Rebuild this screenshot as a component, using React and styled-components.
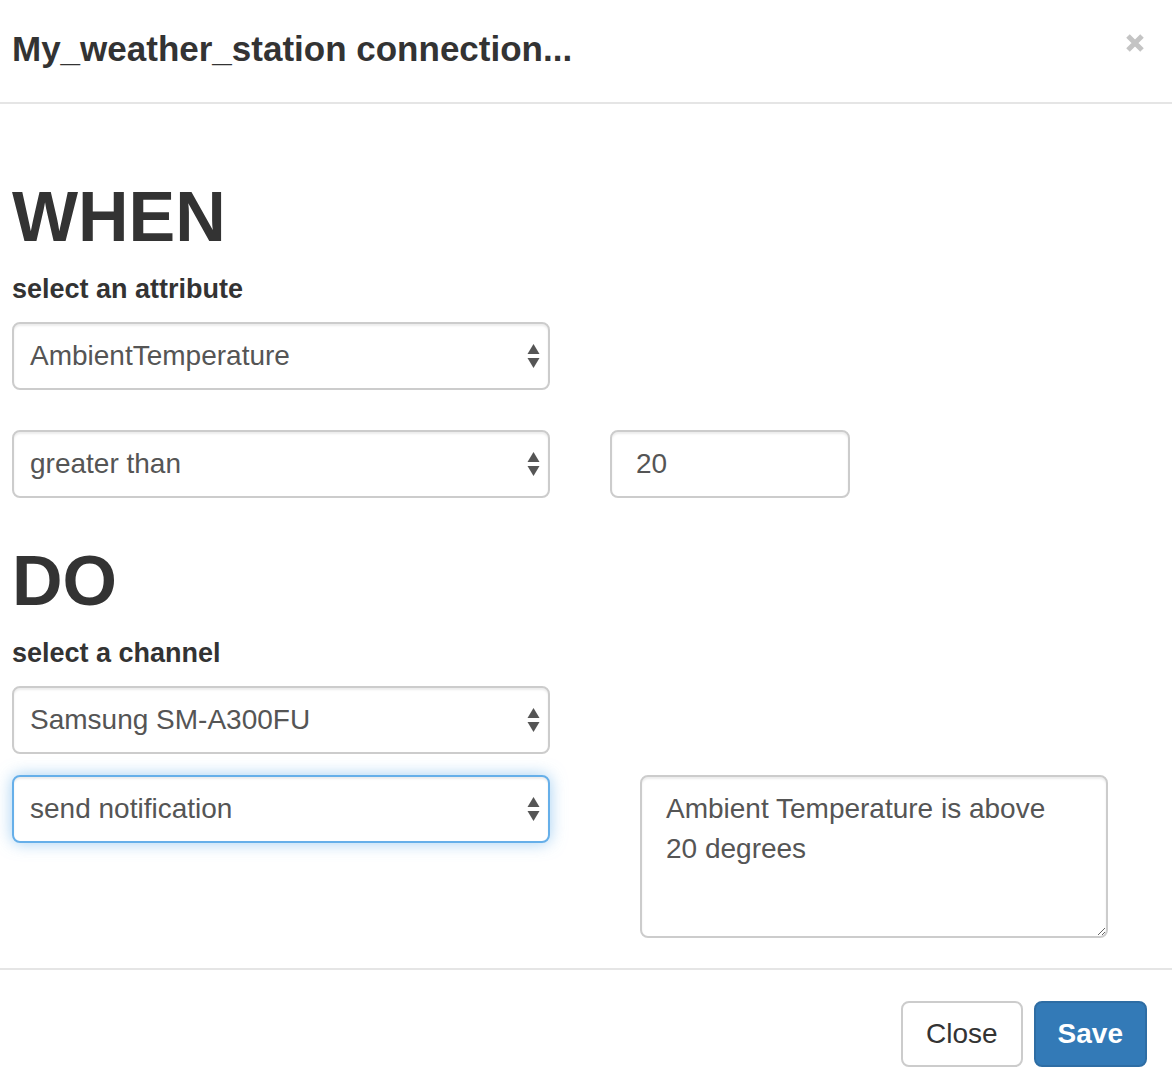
import React from "react";
import styled, { createGlobalStyle } from "styled-components";

const GlobalStyle = createGlobalStyle`
  html, body {
    margin: 0;
    padding: 0;
    background: #fff;
  }
  body {
    font-family: "Liberation Sans", Arial, sans-serif;
    color: #333;
  }
`;

const Modal = styled.div`
  width: 1172px;
  background: #fff;
`;

const Header = styled.div`
  display: flex;
  justify-content: space-between;
  align-items: flex-start;
  padding: 23px 27px 27px 12px;
  border-bottom: 2px solid #e5e5e5;
`;

const Title = styled.h4`
  margin: 0;
  font-size: 35px;
  line-height: 52px;
  font-weight: 700;
  color: #333;
`;

const CloseX = styled.button`
  border: none;
  background: none;
  padding: 0;
  margin-top: 10px;
  cursor: pointer;
  display: flex;
`;

const Body = styled.div`
  padding: 73px 12px 30px 12px;
`;

const Heading = styled.h1`
  margin: ${(p) => p.$top || 0}px 0 12px 0;
  font-size: 70px;
  line-height: 80px;
  font-weight: 700;
  color: #333;
`;

const Label = styled.label`
  display: block;
  font-size: 27px;
  line-height: 40px;
  font-weight: 700;
  color: #333;
  margin-bottom: 13px;
`;

const Row = styled.div`
  display: flex;
  align-items: flex-start;
  gap: ${(p) => p.$gap || 0}px;
  margin-bottom: ${(p) => p.$mb || 0}px;
`;

const SelectBox = styled.div`
  box-sizing: border-box;
  width: 538px;
  height: 68px;
  display: flex;
  align-items: center;
  justify-content: space-between;
  padding: 0 8px 0 16px;
  border: 2px solid ${(p) => (p.$focus ? "#66afe9" : "#ccc")};
  border-radius: 8px;
  background: #fff;
  font-size: 28px;
  color: #555;
  box-shadow: ${(p) =>
    p.$focus
      ? "inset 0 2px 2px rgba(0,0,0,.075), 0 0 16px rgba(102,175,233,.6)"
      : "inset 0 2px 2px rgba(0,0,0,.075)"};
`;

const TextInput = styled.div`
  box-sizing: border-box;
  width: 240px;
  height: 68px;
  display: flex;
  align-items: center;
  padding: 0 24px;
  border: 2px solid #ccc;
  border-radius: 8px;
  font-size: 28px;
  color: #555;
  box-shadow: inset 0 2px 2px rgba(0,0,0,.075);
`;

const TextArea = styled.textarea`
  box-sizing: border-box;
  width: 468px;
  height: 163px;
  padding: 12px 24px;
  border: 2px solid #ccc;
  border-radius: 8px;
  font-family: "Liberation Sans", Arial, sans-serif;
  font-size: 28px;
  line-height: 40px;
  color: #555;
  outline: none;
  box-shadow: inset 0 2px 2px rgba(0,0,0,.075);
`;

const Footer = styled.div`
  display: flex;
  justify-content: flex-end;
  gap: 11px;
  padding: 31px 25px 11px 0;
  border-top: 2px solid #e5e5e5;
`;

const Button = styled.button`
  box-sizing: border-box;
  height: 66px;
  padding: 0 ${(p) => (p.$primary ? 22 : 23)}px;
  border-radius: 8px;
  font-family: "Liberation Sans", Arial, sans-serif;
  font-size: 28px;
  font-weight: ${(p) => (p.$primary ? 700 : 400)};
  border: 2px solid ${(p) => (p.$primary ? "#2e6da4" : "#ccc")};
  background: ${(p) => (p.$primary ? "#337ab7" : "#fff")};
  color: ${(p) => (p.$primary ? "#fff" : "#333")};
  cursor: pointer;
`;

function Arrows() {
  return (
    <svg width="13" height="26" viewBox="0 0 13 26">
      <polygon points="6.5,1 12.5,11 0.5,11" fill="#555" />
      <polygon points="0.5,15 12.5,15 6.5,25" fill="#555" />
    </svg>
  );
}

function Select({ value, focus }) {
  return (
    <SelectBox $focus={focus}>
      <span>{value}</span>
      <Arrows />
    </SelectBox>
  );
}

export default function App() {
  return (
    <Modal>
      <GlobalStyle />
      <Header>
        <Title>My_weather_station connection...</Title>
        <CloseX aria-label="close">
          <svg width="20" height="20" viewBox="0 0 20 20">
            <path d="M3 3 L17 17 M17 3 L3 17" stroke="#c4c4c4" strokeWidth="5" strokeLinecap="butt" />
          </svg>
        </CloseX>
      </Header>
      <Body>
        <Heading>WHEN</Heading>
        <Label>select an attribute</Label>
        <Row $mb={40}>
          <Select value="AmbientTemperature" />
        </Row>
        <Row $gap={60}>
          <Select value="greater than" />
          <TextInput>20</TextInput>
        </Row>
        <Heading $top={43}>DO</Heading>
        <Label>select a channel</Label>
        <Row $mb={21}>
          <Select value="Samsung SM-A300FU" />
        </Row>
        <Row $gap={90}>
          <Select value="send notification" focus />
          <TextArea defaultValue="Ambient Temperature is above 20 degrees" />
        </Row>
      </Body>
      <Footer>
        <Button>Close</Button>
        <Button $primary>Save</Button>
      </Footer>
    </Modal>
  );
}
